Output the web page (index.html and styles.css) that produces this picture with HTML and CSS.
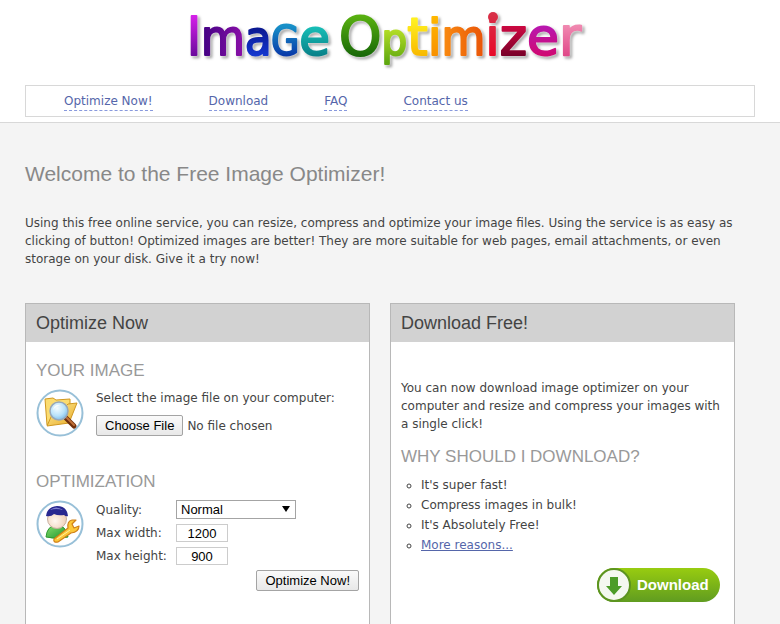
FILE: index.html
```html
<!DOCTYPE html>
<html lang="en">
<head>
    <meta charset="UTF-8">
    <meta name="viewport" content="width=device-width, initial-scale=1.0">
    <title>Image Optimizer</title>
    <link rel="stylesheet" href="styles.css">
</head>
<body>
    <header class="header">
        <div class="logo">
            <svg width="410" height="70" viewBox="184 0 410 70" role="img" aria-label="Image Optimizer">
                <defs>
                    <linearGradient id="c1" gradientUnits="userSpaceOnUse" x1="0" y1="16" x2="0" y2="56"><stop offset="0" stop-color="#d420e8"/><stop offset="1" stop-color="#6a0a9c"/></linearGradient>
                    <linearGradient id="c2" gradientUnits="userSpaceOnUse" x1="198" y1="0" x2="242" y2="0"><stop offset="0" stop-color="#3c0080"/><stop offset="1" stop-color="#8a10a8"/></linearGradient>
                    <linearGradient id="c3" gradientUnits="userSpaceOnUse" x1="0" y1="28" x2="0" y2="56"><stop offset="0" stop-color="#0a1890"/><stop offset="1" stop-color="#1438d0"/></linearGradient>
                    <linearGradient id="c4" gradientUnits="userSpaceOnUse" x1="0" y1="26" x2="0" y2="56"><stop offset="0" stop-color="#1890c8"/><stop offset="1" stop-color="#0838a8"/></linearGradient>
                    <linearGradient id="c5" gradientUnits="userSpaceOnUse" x1="0" y1="26" x2="0" y2="56"><stop offset="0" stop-color="#18c0b8"/><stop offset="1" stop-color="#088088"/></linearGradient>
                    <linearGradient id="c6" gradientUnits="userSpaceOnUse" x1="0" y1="16" x2="0" y2="56"><stop offset="0" stop-color="#58b010"/><stop offset="1" stop-color="#186808"/></linearGradient>
                    <linearGradient id="c7" gradientUnits="userSpaceOnUse" x1="0" y1="28" x2="0" y2="62"><stop offset="0" stop-color="#b8e028"/><stop offset="1" stop-color="#60a810"/></linearGradient>
                    <linearGradient id="c8" gradientUnits="userSpaceOnUse" x1="0" y1="20" x2="0" y2="56"><stop offset="0" stop-color="#fff020"/><stop offset="1" stop-color="#f8b800"/></linearGradient>
                    <linearGradient id="c9" gradientUnits="userSpaceOnUse" x1="0" y1="16" x2="0" y2="56"><stop offset="0" stop-color="#ffb800"/><stop offset="1" stop-color="#f89000"/></linearGradient>
                    <linearGradient id="c10" gradientUnits="userSpaceOnUse" x1="444" y1="0" x2="486" y2="0"><stop offset="0" stop-color="#f88810"/><stop offset="1" stop-color="#e85008"/></linearGradient>
                    <linearGradient id="c11" gradientUnits="userSpaceOnUse" x1="0" y1="14" x2="0" y2="56"><stop offset="0" stop-color="#d83048"/><stop offset="1" stop-color="#e80828"/></linearGradient>
                    <linearGradient id="c12" gradientUnits="userSpaceOnUse" x1="0" y1="28" x2="0" y2="56"><stop offset="0" stop-color="#c80840"/><stop offset="1" stop-color="#780028"/></linearGradient>
                    <linearGradient id="c13" gradientUnits="userSpaceOnUse" x1="0" y1="26" x2="0" y2="56"><stop offset="0" stop-color="#b818b0"/><stop offset="1" stop-color="#d00870"/></linearGradient>
                    <linearGradient id="c14" gradientUnits="userSpaceOnUse" x1="0" y1="26" x2="0" y2="56"><stop offset="0" stop-color="#f088b0"/><stop offset="1" stop-color="#e04888"/></linearGradient>
                </defs>
                <g class="wordmark">
                    <text x="186" y="55"><tspan class="narrow" fill="url(#c1)" stroke="url(#c1)" font-size="53">I</tspan><tspan class="narrow" fill="url(#c2)" stroke="url(#c2)" font-size="50">m</tspan><tspan class="narrow" fill="url(#c3)" stroke="url(#c3)" font-size="48">a</tspan><tspan class="narrow" fill="url(#c4)" stroke="url(#c4)" font-size="40">G</tspan><tspan fill="url(#c5)" stroke="url(#c5)" font-size="50">e</tspan></text>
                    <text x="338" y="55"><tspan fill="url(#c6)" stroke="url(#c6)" font-size="54">O</tspan><tspan class="narrow" fill="url(#c7)" stroke="url(#c7)" font-size="45">p</tspan><tspan fill="url(#c8)" stroke="url(#c8)" font-size="52">t</tspan><tspan fill="url(#c9)" stroke="url(#c9)" font-size="50">i</tspan><tspan class="narrow" fill="url(#c10)" stroke="url(#c10)" font-size="50">m</tspan><tspan fill="url(#c11)" stroke="url(#c11)" font-size="52">i</tspan><tspan fill="url(#c12)" stroke="url(#c12)" font-size="52">z</tspan><tspan fill="url(#c13)" stroke="url(#c13)" font-size="52">e</tspan><tspan fill="url(#c14)" stroke="url(#c14)" font-size="54">r</tspan></text>
                    <circle cx="492" cy="17" r="5" fill="url(#c11)"/>
                </g>
            </svg>
        </div>
        <nav class="navbar">
            <a href="#optimize">Optimize Now!</a>
            <a href="#download">Download</a>
            <a href="#faq">FAQ</a>
            <a href="#contact">Contact us</a>
        </nav>
    </header>

    <main class="container">
        <h1>Welcome to the Free Image Optimizer!</h1>
        <p class="intro">Using this free online service, you can resize, compress and optimize your image files. Using the service is as easy as clicking of button! Optimized images are better! They are more suitable for web pages, email attachments, or even storage on your disk. Give it a try now!</p>

        <div class="columns">
            <!-- Optimize form -->
            <section class="panel" id="optimize">
                <h2>Optimize Now</h2>
                <form class="panel-body">
                    <h3>Your image</h3>
                    <div class="row file-row">
                        <svg class="icon" width="48" height="48" viewBox="0 0 48 48" aria-hidden="true">
                            <defs>
                                <linearGradient id="folder" x1="0" y1="0" x2="1" y2="1"><stop offset="0" stop-color="#fff0a0"/><stop offset="1" stop-color="#e8a820"/></linearGradient>
                                <radialGradient id="lens" cx=".4" cy=".35" r=".7"><stop offset="0" stop-color="#f4fcff"/><stop offset=".6" stop-color="#b8e2fa"/><stop offset="1" stop-color="#78b8e8"/></radialGradient>
                            </defs>
                            <circle cx="24" cy="24" r="22.5" fill="#fff" stroke="#98c0d8" stroke-width="2"/>
                            <path d="M9 10l8-1 3 2 14-1v8l-1 13-22 5z" fill="#fbdc70" stroke="#d09820"/>
                            <path d="M11 37l8-18 10-1 3-3 9-1-8 20z" fill="url(#folder)" stroke="#d09820" stroke-linejoin="round"/>
                            <path d="M30 29l8 8" stroke="#70300c" stroke-width="5" stroke-linecap="round"/>
                            <path d="M31 29l7 7" stroke="#c07038" stroke-width="2" stroke-linecap="round"/>
                            <circle cx="23" cy="22" r="9" fill="url(#lens)" stroke="#98a8b8" stroke-width="1.5"/>
                            <path d="M17 21q1-6 8-5-5 1-8 5z" fill="#fff" opacity=".8"/>
                        </svg>
                        <div class="file-field">
                            <label for="image">Select the image file on your computer:</label>
                            <input type="file" id="image" name="image">
                        </div>
                    </div>

                    <h3>Optimization</h3>
                    <div class="row">
                        <svg class="icon" width="48" height="48" viewBox="0 0 48 48" aria-hidden="true">
                            <defs>
                                <linearGradient id="shirt" x1="0" y1="0" x2="1" y2="1"><stop offset="0" stop-color="#88e070"/><stop offset="1" stop-color="#189028"/></linearGradient>
                                <radialGradient id="face" cx=".4" cy=".6" r=".6"><stop offset="0" stop-color="#fff8f0"/><stop offset="1" stop-color="#f0d0b8"/></radialGradient>
                            </defs>
                            <circle cx="24" cy="24" r="22.5" fill="#fff" stroke="#98c0d8" stroke-width="2"/>
                            <path d="M10 37q1-11 10-12 10 0 12 12-11 3-22 0z" fill="url(#shirt)" stroke="#2c9830"/>
                            <circle cx="21" cy="19" r="9.5" fill="url(#face)" stroke="#c8b0a0"/>
                            <path d="M10 16Q11 7 21 6q10 0 11 10-2 1-4-1-6 1-10-1-3 3-8 2z" fill="#282890"/>
                            <path d="M14 10q6-5 13 0-7-2-13 0z" fill="#8080d0"/>
                            <path d="M18 39l14-11q-1-7 4-8l4 0-4 4 2 4 5-2q0 6-8 7L22 42q-5 1-4-3z" fill="#fcc838" stroke="#d08018" stroke-width="1.2" stroke-linejoin="round"/>
                            <path d="M21 39l13-9" stroke="#fff0a0"/>
                        </svg>
                        <div class="fields">
                            <label for="quality">Quality:</label>
                            <div class="select-box">
                                <select id="quality" name="quality">
                                    <option>Normal</option>
                                    <option>High</option>
                                    <option>Low</option>
                                </select>
                            </div>
                            <label for="max_width">Max width:</label>
                            <input type="text" id="max_width" name="max_width" value="1200">
                            <label for="max_height">Max height:</label>
                            <input type="text" id="max_height" name="max_height" value="900">
                        </div>
                    </div>
                    <div class="submit">
                        <button type="submit">Optimize Now!</button>
                    </div>
                </form>
            </section>

            <!-- Download box -->
            <section class="panel" id="download">
                <h2>Download Free!</h2>
                <div class="panel-body">
                    <p class="about">You can now download image optimizer on your computer and resize and compress your images with a single click!</p>
                    <h3>Why should I download?</h3>
                    <ul>
                        <li>It's super fast!</li>
                        <li>Compress images in bulk!</li>
                        <li>It's Absolutely Free!</li>
                        <li><a href="#reasons">More reasons...</a></li>
                    </ul>
                    <a class="download-btn" href="#get">
                        <svg width="34" height="34" viewBox="0 0 34 34" aria-hidden="true">
                            <circle cx="17" cy="17" r="16" fill="#f4f8f0" stroke="#5c9420" stroke-width="2"/>
                            <path d="M13 9h8v9h4l-8 9-8-9h4z" fill="#4c9c28"/>
                        </svg>
                        <span>Download</span>
                    </a>
                </div>
            </section>
        </div>
    </main>
</body>
</html>
```

FILE: styles.css
```css
* {
    box-sizing: border-box;
}

body {
    margin: 0;
    font-family: Verdana, "DejaVu Sans", sans-serif;
    font-size: 12px;
    line-height: 18px;
    color: #444;
    background-color: #f4f4f4;
}

h1, h2, h3 {
    margin: 0;
    font-family: Arial, "Liberation Sans", sans-serif;
    font-weight: normal;
}

p {
    margin: 0;
}

a {
    color: #5566aa;
}

.header {
    padding: 0 25px 5px;
    background-color: #fff;
    border-bottom: 1px solid #d8d8d8;
}

.logo {
    text-align: center;
    height: 85px;
}

.logo svg {
    max-width: 100%;
}

.wordmark {
    font-family: "DejaVu Sans", sans-serif;
    stroke-width: 2px;
    stroke-linejoin: round;
    filter: drop-shadow(0 0 1px #fff) drop-shadow(2px 2px 1px #aaa);
}

.wordmark .narrow {
    font-family: "DejaVu Sans Condensed", "DejaVu Sans", sans-serif;
}

.navbar {
    display: flex;
    align-items: center;
    gap: 56px;
    height: 32px;
    padding-left: 38px;
    border: 1px solid #d8d8d8;
}

.navbar a {
    line-height: 18px;
    text-decoration: none;
    border-bottom: 1px dashed #8899dd;
}

.container {
    padding: 38px 25px 0;
}

h1 {
    font-size: 21px;
    line-height: 26px;
    color: #888;
}

.intro {
    margin-top: 27px;
}

.columns {
    display: grid;
    grid-template-columns: 1fr 1fr;
    gap: 20px;
    margin-top: 35px;
    padding-right: 20px;
}

.panel {
    background-color: #fff;
    border: 1px solid #b8b8b8;
}

h2 {
    padding: 0 10px;
    font-size: 18px;
    line-height: 38px;
    color: #444;
    background-color: #d2d2d2;
}

.panel-body {
    padding: 19px 10px 48px;
}

h3 {
    font-size: 17px;
    line-height: 20px;
    color: #999;
    text-transform: uppercase;
}

.row {
    display: flex;
    gap: 12px;
    margin-top: 8px;
}

.icon {
    flex: none;
}

.file-row {
    margin-bottom: 35px;
}

.file-field {
    display: flex;
    flex-direction: column;
    gap: 8px;
}

input, select, button {
    font-family: Arial, "Liberation Sans", sans-serif;
    font-size: 13px;
    color: #000;
}

input[type="file"] {
    height: 22px;
    font-family: inherit;
    font-size: 12px;
    color: #444;
}

input::file-selector-button, .submit button {
    height: 21px;
    margin: 0 4px 0 0;
    padding: 0 8px;
    font-family: Arial, "Liberation Sans", sans-serif;
    font-size: 13px;
    line-height: 18px;
    color: #000;
    background: linear-gradient(#fafafa, #e8e8e8);
    border: 1px solid #a4a4a4;
    border-radius: 2px;
}

.fields {
    display: grid;
    grid-template-columns: 74px 120px;
    gap: 5px 6px;
    align-items: center;
}

.fields input {
    width: 52px;
    height: 18px;
    padding: 0;
    text-align: center;
    border: 1px solid #ccc;
}

.select-box {
    position: relative;
    height: 19px;
}

.select-box::after {
    content: "";
    position: absolute;
    top: 6px;
    right: 6px;
    border: 4px solid transparent;
    border-top: 6px solid #000;
    border-bottom: 0;
    pointer-events: none;
}

.fields select {
    display: block;
    width: 100%;
    height: 19px;
    padding: 0 4px;
    appearance: none;
    background-color: #fff;
    border: 1px solid #a4a4a4;
    border-radius: 0;
}

.submit {
    margin-top: 5px;
    text-align: right;
}

.submit button {
    margin: 0;
}

.about {
    padding: 18px 0 14px;
}

ul {
    margin: 8px 0 0;
    padding-left: 20px;
    line-height: 20px;
    list-style: circle;
}

.download-btn {
    display: flex;
    align-items: center;
    gap: 6px;
    width: 123px;
    height: 34px;
    margin: 13px 4px 0 auto;
    font-family: Arial, "Liberation Sans", sans-serif;
    font-size: 15px;
    font-weight: bold;
    color: #fff;
    text-decoration: none;
    background: linear-gradient(#98cc10, #609c20);
    border-radius: 17px;
}
```
